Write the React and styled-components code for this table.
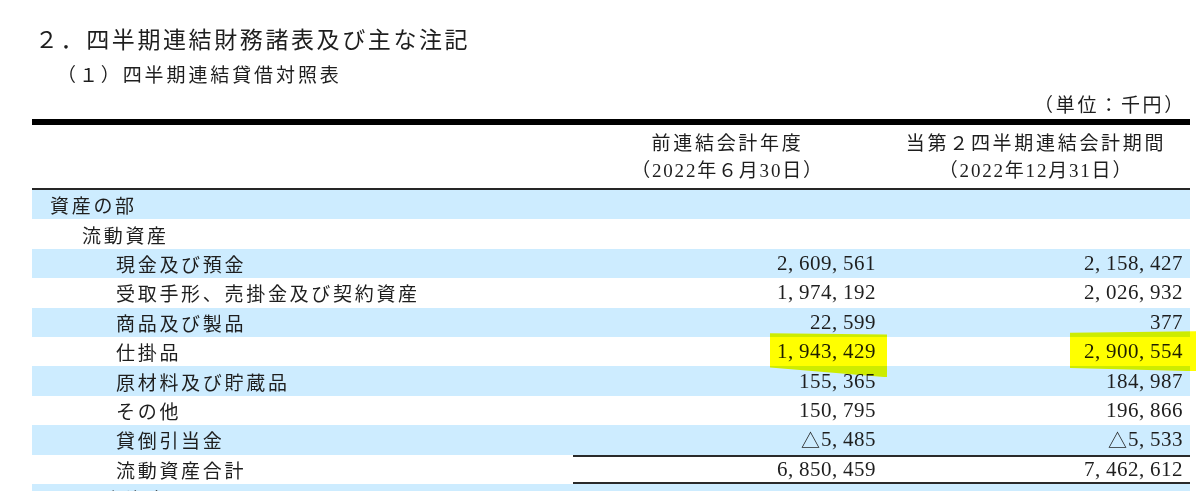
import React from "react";
import styled, { createGlobalStyle } from "styled-components";

const Global = createGlobalStyle`
  html, body {
    margin: 0;
    padding: 0;
    background: #ffffff;
    overflow: hidden;
  }
  body {
    font-family: "Liberation Serif", "Noto Sans CJK JP", serif;
    color: #1e1e1e;
  }
`;

const Page = styled.div`
  width: 1200px;
  padding-top: 22px;
`;

const Title = styled.h1`
  margin: 0;
  padding-left: 35px;
  font-family: "Noto Sans CJK JP", sans-serif;
  font-weight: 400;
  font-size: 23px;
  letter-spacing: 2.6px;
  line-height: 32px;
`;

const Subtitle = styled.h2`
  margin: 7px 0 0;
  padding-left: 57px;
  font-family: "Noto Sans CJK JP", sans-serif;
  font-weight: 400;
  font-size: 19px;
  letter-spacing: 2.9px;
  line-height: 26px;
`;

const Unit = styled.div`
  margin: 5px 0 0 32px;
  width: 1158px;
  box-sizing: border-box;
  padding-right: 4px;
  text-align: right;
  font-family: "Noto Sans CJK JP", sans-serif;
  font-size: 19px;
  letter-spacing: 2.7px;
  line-height: 24px;
`;

const Table = styled.div`
  margin: 3px 0 0 32px;
  width: 1158px;
  border-top: 6px solid #000;
`;

const HeaderRow = styled.div`
  display: grid;
  grid-template-columns: 541px 309px 1fr;
  height: 65px;
  box-sizing: border-box;
  border-bottom: 2px solid #262626;
`;

const HeaderCell = styled.div`
  display: flex;
  flex-direction: column;
  align-items: center;
  justify-content: center;
  font-size: 19px;
  line-height: 27px;
  white-space: nowrap;
`;

const HeadLine = styled.span`
  letter-spacing: ${(p) => (p.$tight ? 1.8 : 2.7)}px;
`;

const Row = styled.div`
  display: grid;
  grid-template-columns: 541px 309px 1fr;
  height: 29.4px;
  background: ${(p) => (p.$shaded ? "#cdecff" : "#ffffff")};
`;

const Label = styled.div`
  display: flex;
  align-items: center;
  padding-left: ${(p) => [18, 50, 84][p.$level]}px;
  font-family: "Noto Sans CJK JP", sans-serif;
  font-size: 19px;
  letter-spacing: 2.7px;
  white-space: nowrap;
`;

const Amount = styled.div`
  display: flex;
  align-items: center;
  justify-content: flex-end;
  box-sizing: border-box;
  padding-right: ${(p) => p.$pad}px;
  font-size: 21px;
  letter-spacing: 0.5px;
  white-space: nowrap;
  ${(p) =>
    p.$total &&
    `
    border-top: 2px solid #2a2a2a;
    border-bottom: 2px solid #2a2a2a;
  `}
`;

const Comma = styled.span`
  display: inline-block;
  width: 11px;
`;

const Triangle = styled.span`
  font-family: "Noto Sans CJK JP", sans-serif;
  font-size: 19px;
  letter-spacing: 0;
  margin-right: 1px;
`;

const Marker = styled.span`
  position: relative;
  display: inline-block;
  &::after {
    content: "";
    position: absolute;
    left: ${(p) => p.$g.left}px;
    right: ${(p) => p.$g.right}px;
    top: ${(p) => p.$g.top}px;
    bottom: ${(p) => p.$g.bottom}px;
    background: #ffff00;
    mix-blend-mode: multiply;
    clip-path: ${(p) => p.$g.clip};
    pointer-events: none;
  }
`;

function Num({ value }) {
  const parts = [];
  let rest = value;
  if (rest.startsWith("△")) {
    parts.push(<Triangle key="t">△</Triangle>);
    rest = rest.slice(1);
  }
  const groups = rest.split(",");
  groups.forEach((g, i) => {
    parts.push(<span key={"g" + i}>{g}</span>);
    if (i < groups.length - 1) parts.push(<Comma key={"c" + i}>,</Comma>);
  });
  return <>{parts}</>;
}

const rows = [
  { label: "資産の部", level: 0 },
  { label: "流動資産", level: 1 },
  { label: "現金及び預金", level: 2, a: "2,609,561", b: "2,158,427" },
  { label: "受取手形、売掛金及び契約資産", level: 2, a: "1,974,192", b: "2,026,932" },
  { label: "商品及び製品", level: 2, a: "22,599", b: "377" },
  {
    label: "仕掛品",
    level: 2,
    a: "1,943,429",
    b: "2,900,554",
    markA: { left: -7, right: -11, top: -6, bottom: -13, clip: "polygon(0 0, 100% 3%, 100% 100%, 0 78%)" },
    markB: { left: -14, right: -13, top: -8, bottom: -7, clip: "polygon(0 4%, 100% 0, 100% 100%, 0 92%)" },
  },
  { label: "原材料及び貯蔵品", level: 2, a: "155,365", b: "184,987" },
  { label: "その他", level: 2, a: "150,795", b: "196,866" },
  { label: "貸倒引当金", level: 2, a: "△5,485", b: "△5,533" },
  { label: "流動資産合計", level: 2, a: "6,850,459", b: "7,462,612", total: true },
  { label: "固定資産", level: 1 },
  { label: "有形固定資産", level: 2 },
];

function Value({ value, mark }) {
  if (!value) return null;
  if (mark)
    return (
      <Marker $g={mark}>
        <Num value={value} />
      </Marker>
    );
  return <Num value={value} />;
}

export default function App() {
  return (
    <>
      <Global />
      <Page>
        <Title>２．四半期連結財務諸表及び主な注記</Title>
        <Subtitle>（１）四半期連結貸借対照表</Subtitle>
        <Unit>（単位：千円）</Unit>
        <Table>
          <HeaderRow>
            <div />
            <HeaderCell>
              <HeadLine>前連結会計年度</HeadLine>
              <HeadLine $tight>（2022年６月30日）</HeadLine>
            </HeaderCell>
            <HeaderCell>
              <HeadLine>当第２四半期連結会計期間</HeadLine>
              <HeadLine $tight>（2022年12月31日）</HeadLine>
            </HeaderCell>
          </HeaderRow>
          {rows.map((r, i) => (
            <Row key={i} $shaded={i % 2 === 0}>
              <Label $level={r.level}>{r.label}</Label>
              <Amount $pad={6} $total={r.total}>
                <Value value={r.a} mark={r.markA} />
              </Amount>
              <Amount $pad={7} $total={r.total}>
                <Value value={r.b} mark={r.markB} />
              </Amount>
            </Row>
          ))}
        </Table>
      </Page>
    </>
  );
}
